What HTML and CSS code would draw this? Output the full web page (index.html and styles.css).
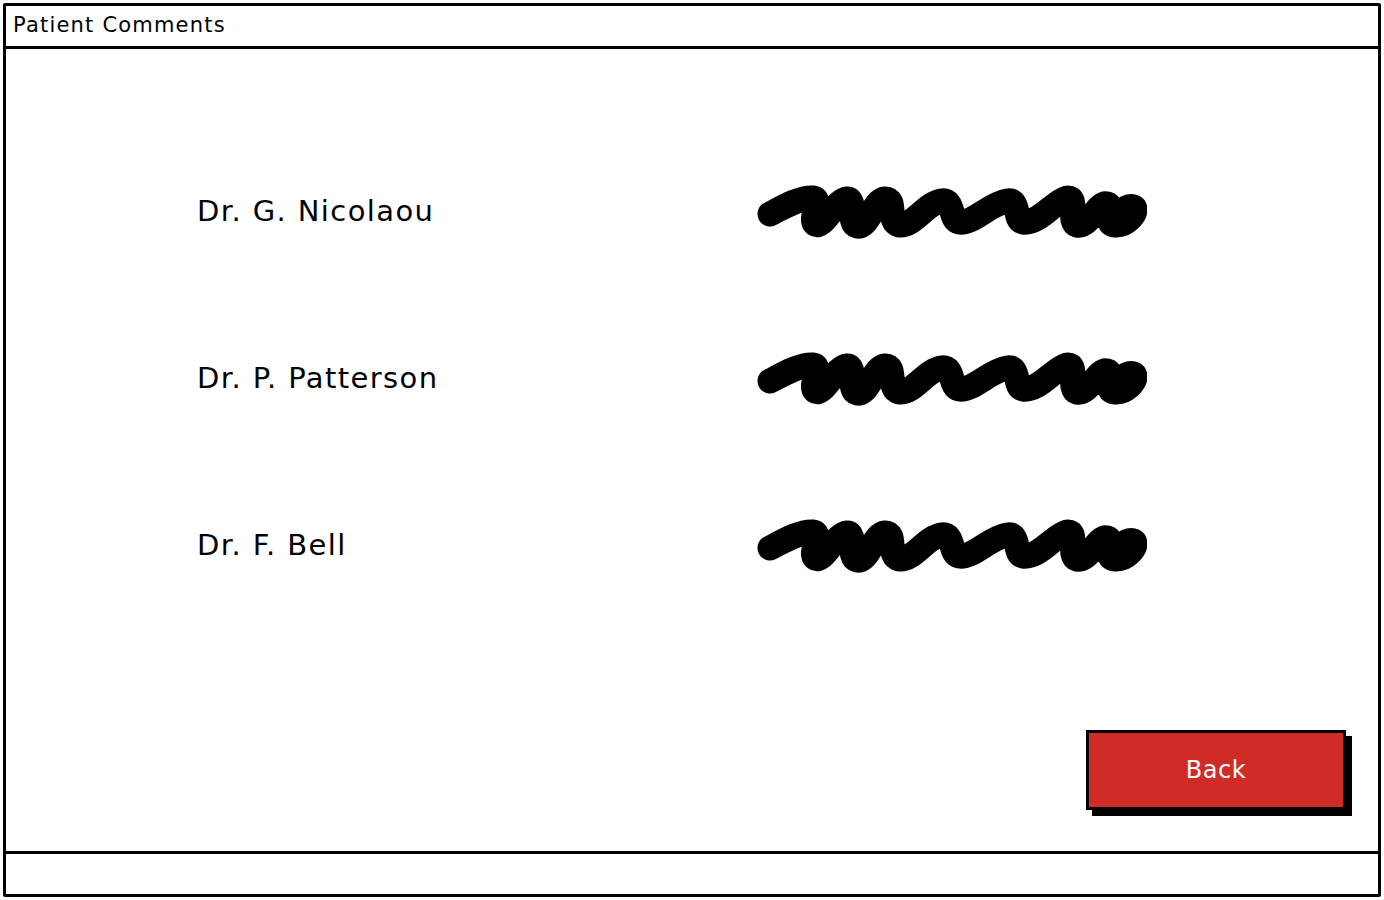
FILE: index.html
```html
<!DOCTYPE html>
<html lang="en">
<head>
  <meta charset="UTF-8" />
  <title>Patient Comments</title>
  <link rel="stylesheet" href="styles.css">
</head>
<body>
  <div class="window">
    <div class="titlebar">Patient Comments</div>

    <div class="main">
      <div class="comments">
        <div class="name">Dr. G. Nicolaou</div>
        <svg class="scribble" viewBox="0 0 390 56" width="390" height="56">
          <path d="M13,30 C28,22 44,13 56,14 C66,15 52,34 58,40 C66,46 78,16 90,15 C100,14 90,40 100,42 C112,44 116,16 128,15 C140,14 130,38 142,41 C156,43 168,20 184,17 C198,15 192,36 202,38 C216,40 232,20 250,17 C264,15 256,36 266,38 C282,40 296,18 310,14 C322,12 310,38 320,41 C332,44 340,18 350,20 C358,22 346,40 358,41 C370,42 378,30 378,26 C378,20 368,22 362,30" />
        </svg>

        <div class="name">Dr. P. Patterson</div>
        <svg class="scribble" viewBox="0 0 390 56" width="390" height="56">
          <path d="M13,30 C28,22 44,13 56,14 C66,15 52,34 58,40 C66,46 78,16 90,15 C100,14 90,40 100,42 C112,44 116,16 128,15 C140,14 130,38 142,41 C156,43 168,20 184,17 C198,15 192,36 202,38 C216,40 232,20 250,17 C264,15 256,36 266,38 C282,40 296,18 310,14 C322,12 310,38 320,41 C332,44 340,18 350,20 C358,22 346,40 358,41 C370,42 378,30 378,26 C378,20 368,22 362,30" />
        </svg>

        <div class="name">Dr. F. Bell</div>
        <svg class="scribble" viewBox="0 0 390 56" width="390" height="56">
          <path d="M13,30 C28,22 44,13 56,14 C66,15 52,34 58,40 C66,46 78,16 90,15 C100,14 90,40 100,42 C112,44 116,16 128,15 C140,14 130,38 142,41 C156,43 168,20 184,17 C198,15 192,36 202,38 C216,40 232,20 250,17 C264,15 256,36 266,38 C282,40 296,18 310,14 C322,12 310,38 320,41 C332,44 340,18 350,20 C358,22 346,40 358,41 C370,42 378,30 378,26 C378,20 368,22 362,30" />
        </svg>
      </div>

      <div class="actions">
        <button class="back">Back</button>
      </div>
    </div>

    <div class="statusbar"></div>
  </div>
</body>
</html>
```

FILE: styles.css
```css
html, body {
  margin: 0;
  padding: 0;
  background: white;
}
body {
  font-family: "DejaVu Sans", "Noto Sans", sans-serif;
  color: black;
}
.window {
  margin: 3px;
  height: 894px;
  box-sizing: border-box;
  border: 3px solid black;
  border-radius: 2px;
  display: flex;
  flex-direction: column;
}
.titlebar {
  height: 40px;
  border-bottom: 3px solid black;
  padding-left: 7px;
  font-size: 21px;
  letter-spacing: 1.2px;
  line-height: 38px;
}
.main {
  flex: 1;
  display: flex;
  flex-direction: column;
}
.comments {
  display: grid;
  grid-template-columns: 560px 390px;
  grid-auto-rows: 167px;
  align-items: center;
  padding-top: 78px;
  padding-left: 191px;
}
.name {
  font-size: 29px;
  letter-spacing: 1.4px;
}
.scribble {
  display: block;
  margin-top: 2px;
}
.scribble path {
  fill: none;
  stroke: black;
  stroke-width: 25;
  stroke-linecap: round;
  stroke-linejoin: round;
}
.actions {
  margin-top: auto;
  display: flex;
  justify-content: flex-end;
  padding: 0 32px 41px 0;
}
.back {
  width: 260px;
  height: 80px;
  background: #d12b28;
  color: white;
  border: 3px solid black;
  box-shadow: 6px 6px 0 black;
  font-family: inherit;
  font-size: 24px;
  letter-spacing: 0.5px;
  cursor: pointer;
}
.statusbar {
  height: 40px;
  border-top: 3px solid black;
}
```
